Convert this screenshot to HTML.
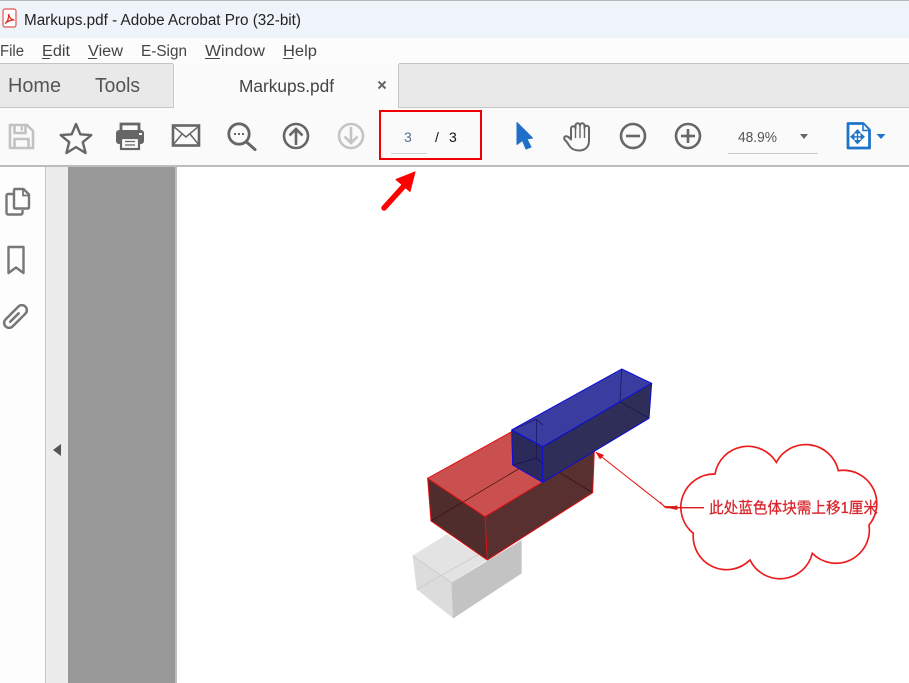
<!DOCTYPE html>
<html><head><meta charset="utf-8"><style>
html,body{margin:0;padding:0;background:#fff;width:909px;height:683px;overflow:hidden}
svg{display:block}
text{font-family:"Liberation Sans","Noto Sans CJK SC",sans-serif}
</style></head><body>
<svg width="909" height="683" viewBox="0 0 909 683" xmlns="http://www.w3.org/2000/svg">
<rect width="909" height="683" fill="#fff"/>
<!-- title bar -->
<rect width="909" height="38" fill="#eff3fa"/>
<rect width="909" height="1" fill="#b8b8b8"/>
<rect x="3" y="9" width="13" height="18" rx="2" fill="#fff" stroke="#e0554f" stroke-width="1.200"/>
<path d="M5 23.500c3-2 4-6 3.500-9.500 1 3.500 3 6 6 6-3-.3-6.500 1-9.500 3.500z" fill="none" stroke="#e0302a" stroke-width="1.300"/>
<text x="24" y="25" font-size="15.500" fill="#222" textLength="277" lengthAdjust="spacingAndGlyphs">Markups.pdf - Adobe Acrobat Pro (32-bit)</text>
<!-- menu -->
<rect y="38" width="909" height="25" fill="#fcfcfc"/>
<g font-size="15.500" fill="#444">
<text x="0" y="56" textLength="24" lengthAdjust="spacingAndGlyphs">File</text>
<text x="42" y="56" textLength="28" lengthAdjust="spacingAndGlyphs">Edit</text>
<text x="88" y="56" textLength="35" lengthAdjust="spacingAndGlyphs">View</text>
<text x="141" y="56" textLength="46" lengthAdjust="spacingAndGlyphs">E-Sign</text>
<text x="205" y="56" textLength="60" lengthAdjust="spacingAndGlyphs">Window</text>
<text x="283" y="56" textLength="34" lengthAdjust="spacingAndGlyphs">Help</text>
</g>
<g fill="#444">
<rect x="42" y="58" width="8" height="1"/><rect x="88" y="58" width="9" height="1"/><rect x="205" y="58" width="15" height="1"/><rect x="283" y="58" width="10" height="1"/>
</g>
<!-- tab strip -->
<rect y="63" width="909" height="45" fill="#e9e9e9"/>
<rect y="63" width="909" height="1" fill="#c4c4c4"/>
<rect y="107" width="909" height="1" fill="#c8c8c8"/>
<rect x="173" y="63" width="226" height="45" fill="#fbfbfb"/>
<rect x="173" y="64" width="1" height="44" fill="#c8c8c8"/>
<rect x="398" y="64" width="1" height="44" fill="#c8c8c8"/>
<rect x="174" y="107" width="224" height="1" fill="#fafafa"/>
<text x="8" y="92" font-size="20" fill="#555" textLength="53" lengthAdjust="spacingAndGlyphs">Home</text>
<text x="95" y="92" font-size="20" fill="#555" textLength="45" lengthAdjust="spacingAndGlyphs">Tools</text>
<text x="239" y="92" font-size="17.500" fill="#444" textLength="95" lengthAdjust="spacingAndGlyphs">Markups.pdf</text>
<path d="M378.500 81.500l7 7M385.500 81.500l-7 7" stroke="#666" stroke-width="2" fill="none"/>
<!-- toolbar -->
<rect y="108" width="909" height="57" fill="#fafafa"/>
<rect y="165" width="909" height="2" fill="#bcbcbc"/>
<!-- save -->
<g fill="none" stroke="#c2c2c2" stroke-width="2.600">
<path d="M10 125h17l6 6v17H10z" stroke-linejoin="round"/>
<path d="M14.500 125v8h11v-8M14.500 148v-9h14v9"/>
</g>
<rect x="20.500" y="126.500" width="2.500" height="4" fill="#c2c2c2"/>
<!-- star -->
<path d="M76 124l4.300 10.300 11 .8-8.500 7.100 2.800 10.800-9.600-5.900-9.600 5.900 2.800-10.800-8.500-7.100 11-.8z" fill="none" stroke="#666" stroke-width="2.400" stroke-linejoin="round"/>
<!-- print -->
<rect x="116" y="130" width="28" height="14" rx="3" fill="#666"/>
<path d="M121 131v-7h18v7" fill="none" stroke="#666" stroke-width="2.800"/>
<rect x="121" y="138" width="18" height="11" fill="#fafafa" stroke="#666" stroke-width="2.200"/>
<path d="M125 141.500h10M125 145h10" stroke="#666" stroke-width="1.200"/>
<rect x="139" y="133" width="3" height="2" fill="#fafafa"/>
<!-- mail -->
<rect x="173" y="125.500" width="26" height="20" fill="none" stroke="#666" stroke-width="2.600"/>
<path d="M173 126l13 11 13-11M173 145l9-11M199 145l-9-11" fill="none" stroke="#666" stroke-width="1.500"/>
<!-- find -->
<circle cx="239" cy="134" r="10.200" fill="none" stroke="#666" stroke-width="2.800"/>
<path d="M246.500 142l8.500 7.500" stroke="#666" stroke-width="3" stroke-linecap="round"/>
<g fill="#666"><rect x="234" y="133" width="2" height="2"/><rect x="238" y="133" width="2" height="2"/><rect x="242" y="133" width="2" height="2"/></g>
<!-- up -->
<circle cx="296" cy="136" r="12" fill="none" stroke="#666" stroke-width="2.600"/>
<path d="M296 145v-16M289.500 135.500l6.500-6.500 6.500 6.500" fill="none" stroke="#666" stroke-width="2.600"/>
<!-- down -->
<circle cx="351" cy="136" r="12" fill="none" stroke="#c4c4c4" stroke-width="2.600"/>
<path d="M351 127v16M344.500 136.500l6.500 6.500 6.500-6.500" fill="none" stroke="#c4c4c4" stroke-width="2.600"/>
<!-- page box -->
<rect x="391" y="153" width="36" height="1" fill="#d0d0d0"/>
<rect x="481" y="119" width="1" height="34" fill="#dadada"/>
<text x="404" y="142" font-size="14" fill="#54708c">3</text>
<text x="435" y="142" font-size="14" fill="#111">/</text>
<text x="449" y="142" font-size="14" fill="#111">3</text>
<rect x="380" y="111" width="101" height="48" fill="none" stroke="#f00000" stroke-width="2"/>
<!-- red arrow -->
<path d="M384 208L403 187" stroke="#f00" stroke-width="5.500" stroke-linecap="round"/>
<path d="M396 179.500L415 172 410 191.500z" fill="#f00" stroke="#f00" stroke-width="1" stroke-linejoin="round"/>
<!-- pointer -->
<path d="M517 122.500L532.500 138 527 139 531 147 526 149 522.500 140.500 517 144.500z" fill="#1f6fc8" stroke="#1f6fc8" stroke-width="1" stroke-linejoin="round"/>
<!-- hand -->
<path d="M571 139.500V128.500a2.200 2.200 0 0 1 4.500 0V125.500a2.200 2.200 0 0 1 4.500 0V125.500a2.200 2.200 0 0 1 4.500 0V128a2.200 2.200 0 0 1 4.500 0V141c0 6-4 9.500-10 9.500-5 0-7.500-1.500-9.500-4.500-1.500-2.500-3-4.500-4.500-6-1.800-2-.5-4 1.500-3.700 1.500.2 3 1.500 4.500 3.200z" fill="none" stroke="#666" stroke-width="2" stroke-linejoin="round"/>
<path d="M575.500 128v10M580 126v12M584.500 126v12" stroke="#666" stroke-width="1.400"/>
<!-- zoom out / in -->
<circle cx="633" cy="136" r="12" fill="none" stroke="#666" stroke-width="2.600"/>
<rect x="626" y="134.700" width="14" height="2.600" fill="#666"/>
<circle cx="688" cy="136" r="12" fill="none" stroke="#666" stroke-width="2.600"/>
<rect x="681" y="134.700" width="14" height="2.600" fill="#666"/>
<rect x="686.700" y="129" width="2.600" height="14" fill="#666"/>
<text x="738" y="142" font-size="14.500" fill="#555" textLength="39" lengthAdjust="spacingAndGlyphs">48.9%</text>
<path d="M800 134h8l-4 5z" fill="#666"/>
<rect x="728" y="153" width="90" height="1" fill="#c8c8c8"/>
<!-- fit page -->
<path d="M848 123.500h15l6.500 6.500v18h-21.500z" fill="#fff" stroke="#1f74c9" stroke-width="2.800" stroke-linejoin="round"/>
<path d="M863 124v6.500h6" fill="#eaf2fb" stroke="#1f74c9" stroke-width="1.500"/>
<path d="M857.500 129l4 4.500h-8zM857.500 144.500l4-4.500h-8zM850 136.800l4.500-4v8zM865 136.800l-4.500-4v8z" fill="#1f74c9"/>
<path d="M857.500 132v9M853 136.800h9" stroke="#1f74c9" stroke-width="1.400"/>
<path d="M876.500 134h9l-4.500 5z" fill="#1f74c9"/>
<!-- side -->
<rect y="167" width="45" height="516" fill="#fdfdfd"/>
<rect x="45" y="167" width="1" height="516" fill="#c4c4c4"/>
<rect x="46" y="167" width="22" height="516" fill="#ececec"/>
<rect x="68" y="167" width="107" height="516" fill="#999"/>
<rect x="175" y="167" width="2" height="516" fill="#bdbdbd"/>
<path d="M61 444v12l-8-6z" fill="#555"/>
<!-- side icons -->
<path d="M13.500 194H8a1.500 1.500 0 0 0-1.500 1.500V213a1.500 1.500 0 0 0 1.500 1.500h13a1.500 1.500 0 0 0 1.500-1.500v-3" fill="none" stroke="#777" stroke-width="2.400"/>
<path d="M15 189h8.500l5.500 5.500v13a1 1 0 0 1-1 1H15a1 1 0 0 1-1-1v-17.500a1 1 0 0 1 1-1z" fill="#fdfdfd" stroke="#777" stroke-width="2.400" stroke-linejoin="round"/>
<path d="M23 189.500v6h6" fill="none" stroke="#777" stroke-width="1.800"/>
<path d="M8.500 247h15v26l-7.500-5.500-7.500 5.500z" fill="none" stroke="#777" stroke-width="2.400" stroke-linejoin="round"/>
<g transform="rotate(45 15.500 316.500)" fill="none" stroke="#777" stroke-width="2.500" stroke-linecap="round">
<path d="M20.500 309.500V307.500a5 5 0 0 0-10 0V325.500a5 5 0 0 0 10 0V311.500"/>
<path d="M15.500 324V312"/>
</g>
<!-- 3D figure -->
<g transform="translate(400 360) scale(.33333)">
  <!-- grey box -->
  <path d="M38 587L140 523 262 600 155 668z" fill="#e3e3e3"/>
  <path d="M155 668L365 540V640L160 775z" fill="#c3c3c3"/>
  <path d="M38 587L155 668 160 775 50 688z" fill="#dcdcdc"/>
  <path d="M50 688L250 575 365 640M38 587L155 668M155 668L160 775" fill="none" stroke="#c8c8c8" stroke-width="2"/>
  <!-- red box -->
  <path d="M83 355L335 215 409 178 583 272 255 470z" fill="#c9504f"/>
  <path d="M255 470L583 272 578 398 262 600z" fill="#58302f"/>
  <path d="M83 355L255 470 262 600 93 483z" fill="#4f2d2c"/>
  <path d="M93 483L409 295M409 295L578 398" fill="none" stroke="#3c0c0c" stroke-width="2"/>
  <path d="M83 355L335 215M583 272L255 470 83 355 93 483 262 600 578 398 583 272M255 470L262 600" fill="none" stroke="#e30f12" stroke-width="3"/>
  <!-- blue box -->
  <path d="M335 210L665 27 755 70 428 260z" fill="#3a3c9f"/>
  <path d="M428 260L755 70 747 175 428 367z" fill="#2e2e58"/>
  <path d="M335 210L428 260 428 367 338 315z" fill="#2b2a5b"/>
  <path d="M409 178L335 210M409 178L428 195M409 178V295L338 315M409 295L428 310M660 125L747 175M660 125L665 27M660 125L440 255" fill="none" stroke="#13135c" stroke-width="2"/>
  <path d="M335 210L665 27 755 70 428 260zM755 70L747 175 428 367 338 315 335 210M428 260V367" fill="none" stroke="#0c0ce0" stroke-width="3" stroke-linejoin="round"/>
  <!-- leader -->
  <path d="M598 285L795 440H822" fill="none" stroke="#e81010" stroke-width="3"/>
  <path d="M586 275L612 285 600 298z" fill="#e81010"/>
</g>
<!-- cloud -->
<g transform="translate(660 430) scale(.33333)">
  <path d="M165 132A100 100 0 0 1 349 97A100 100 0 0 1 535 122A100 100 0 0 1 627 285A100 100 0 0 1 457 370A100 100 0 0 1 270 390A100 100 0 0 1 100 310A100 100 0 0 1 165 132z" fill="#fff" stroke="#ec1c1c" stroke-width="5"/>
  <path d="M20 233H132" stroke="#d81a1a" stroke-width="4"/>
  <path d="M20 233L52 226V240z" fill="#d81a1a"/>
  <path d="M0 216L16 233H24" fill="none" stroke="#e81010" stroke-width="3"/>
</g>
<text x="709" y="513" font-size="15.500" fill="#d8242a" stroke="#d8242a" stroke-width=".25" textLength="169" lengthAdjust="spacingAndGlyphs">此处蓝色体块需上移1厘米</text>
</svg>
</body></html>
